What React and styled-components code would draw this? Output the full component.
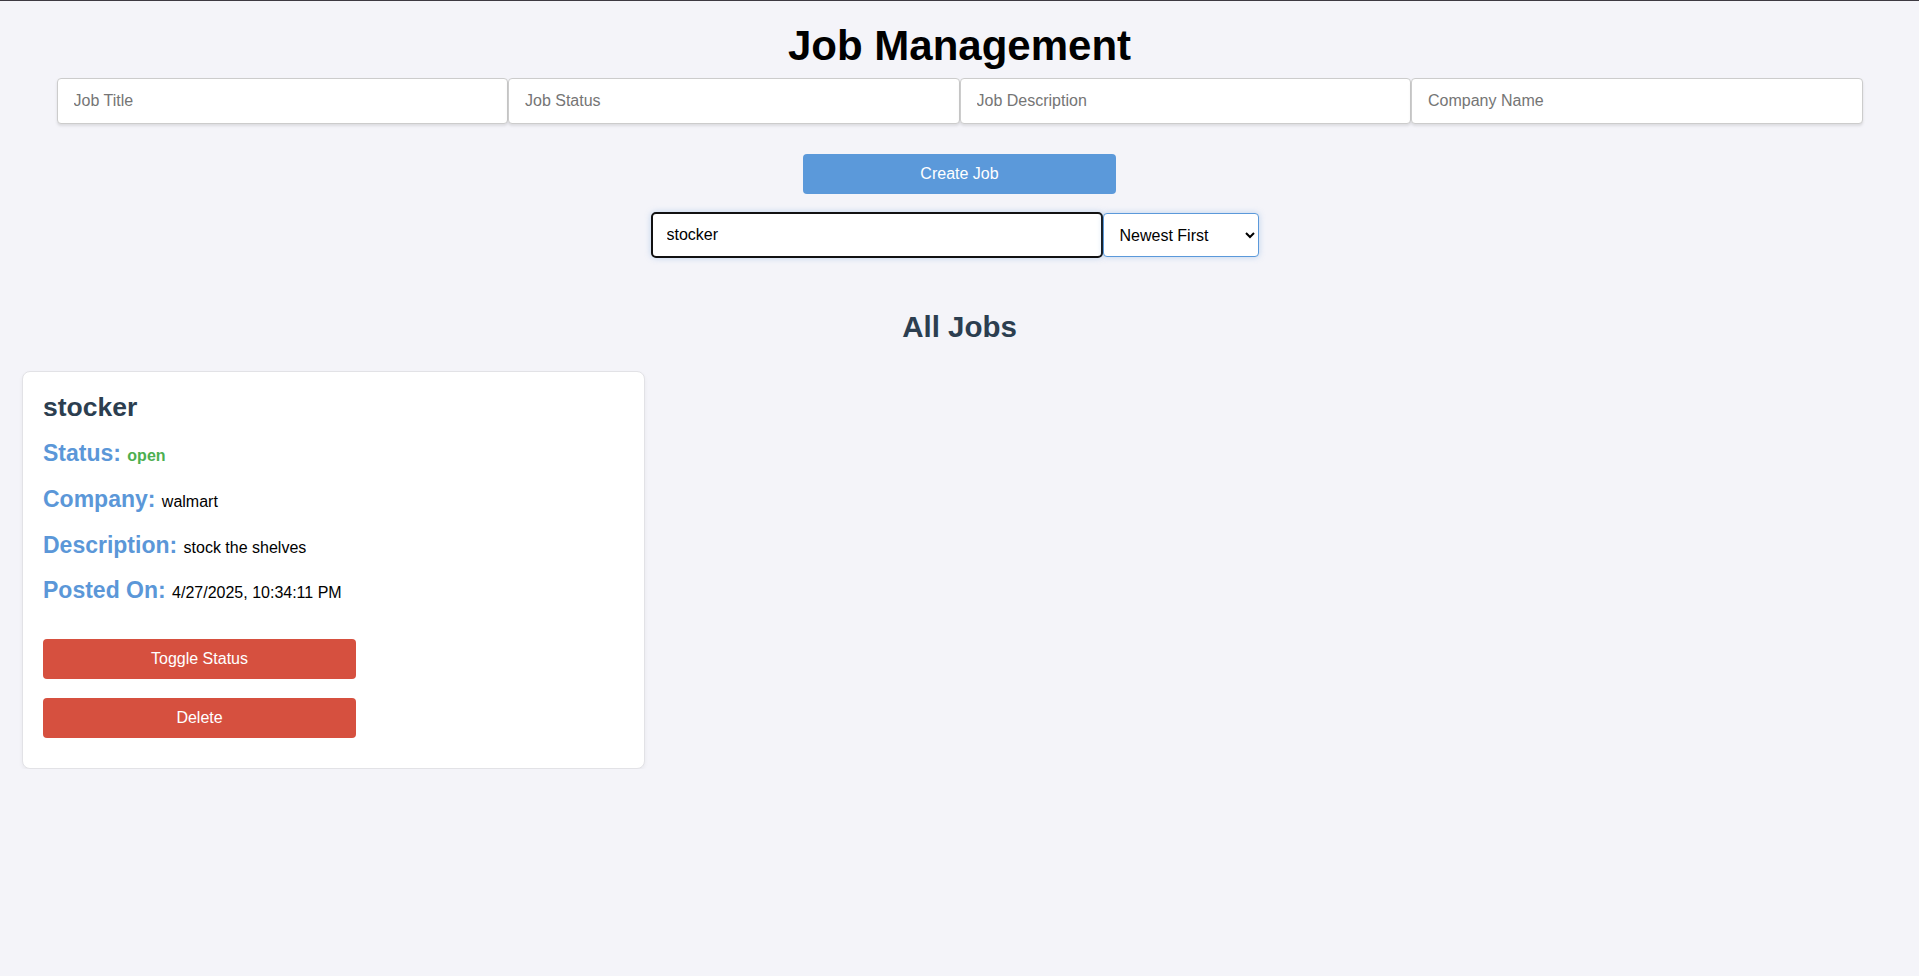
import React, { useEffect, useRef, useState } from "react";
import styled, { createGlobalStyle } from "styled-components";

const GlobalStyle = createGlobalStyle`
  html, body {
    margin: 0;
    padding: 0;
    background: #f4f4f9;
    font-family: "Liberation Sans", Arial, sans-serif;
    color: #000;
  }
  * { box-sizing: border-box; }
`;

const TopLine = styled.div`
  height: 1px;
  background: #3d3a42;
`;

const Page = styled.div`
  display: flex;
  flex-direction: column;
  align-items: stretch;
`;

const Title = styled.h1`
  margin: 21px 0 0;
  font-size: 42px;
  line-height: 48px;
  font-weight: 700;
  text-align: center;
  color: #000;
`;

const FormRow = styled.div`
  display: grid;
  grid-template-columns: repeat(4, 1fr);
  width: 1806px;
  margin: 8px auto 0;
`;

const TextInput = styled.input`
  height: 46px;
  padding: 0 16px;
  border: 1px solid #cccccc;
  border-radius: 4px;
  background: #fff;
  font-family: "Liberation Sans", Arial, sans-serif;
  font-size: 16px;
  color: #000;
  box-shadow: 0 2px 3px rgba(0, 0, 0, 0.1);
  outline: none;
  &::placeholder { color: #757575; }
`;

const ActionButton = styled.button`
  width: 313px;
  height: 40px;
  border: none;
  border-radius: 4px;
  background: ${(p) => (p.$danger ? "#d6503f" : "#5b99da")};
  color: #fff;
  font-family: "Liberation Sans", Arial, sans-serif;
  font-size: 16px;
  cursor: pointer;
  padding: 0;
`;

const CreateWrap = styled.div`
  display: flex;
  justify-content: center;
  margin-top: 30px;
`;

const SearchRow = styled.div`
  display: flex;
  justify-content: center;
  align-items: center;
  margin-top: 18px;
`;

const SearchInput = styled.input`
  width: 452px;
  height: 46px;
  padding: 0 16px 0 14px;
  border: 2px solid #111;
  border-radius: 5px;
  background: #fff;
  font-family: "Liberation Sans", Arial, sans-serif;
  font-size: 16px;
  color: #000;
  box-shadow: 0 0 6px rgba(91, 153, 218, 0.35);
  outline: none;
`;

const SortSelect = styled.select`
  width: 156px;
  height: 44px;
  margin-right: 10px;
  padding: 0 8px 0 12px;
  border: 1px solid #5b99da;
  border-radius: 4px;
  background: #fff;
  font-family: "Liberation Sans", Arial, sans-serif;
  font-size: 16px;
  color: #000;
  box-shadow: 0 0 6px rgba(91, 153, 218, 0.35);
  outline: none;
`;

const SectionTitle = styled.h2`
  margin: 52px 0 0;
  font-size: 29.5px;
  line-height: 34px;
  font-weight: 700;
  text-align: center;
  color: #2c3e50;
`;

const JobGrid = styled.div`
  display: grid;
  grid-template-columns: repeat(auto-fill, 623px);
  gap: 20px;
  padding: 0 22px;
  margin-top: 27px;
`;

const Card = styled.div`
  display: flex;
  flex-direction: column;
  background: #fff;
  border: 1px solid #e2e2e6;
  border-radius: 8px;
  padding: 20px 20px 30px;
  box-shadow: 0 2px 4px rgba(0, 0, 0, 0.05);
`;

const CardTitle = styled.h3`
  margin: 0;
  font-size: 26.5px;
  line-height: 30.5px;
  font-weight: 700;
  color: #2c3e50;
`;

const Details = styled.div`
  display: flex;
  flex-direction: column;
  gap: 19px;
  margin-top: 19.5px;
`;

const Row = styled.p`
  margin: 0;
  height: 26.8px;
  line-height: 26.5px;
  font-size: 16px;
  color: #000;
`;

const Label = styled.span`
  font-size: 23px;
  line-height: 1;
  font-weight: 700;
  color: #5b97d8;
`;

const StatusValue = styled.span`
  font-weight: 700;
  color: ${(p) => (p.$open ? "#4caf50" : "#d6503f")};
`;

const Buttons = styled.div`
  display: flex;
  flex-direction: column;
  gap: 19px;
  margin-top: 33px;
`;

const jobs = [
  {
    id: 1,
    title: "stocker",
    status: "open",
    company: "walmart",
    description: "stock the shelves",
    posted: "4/27/2025, 10:34:11 PM",
  },
];

export default function App() {
  const [search, setSearch] = useState("stocker");
  const ref = useRef(null);

  useEffect(() => {
    if (ref.current) {
      ref.current.focus();
      const n = ref.current.value.length;
      ref.current.setSelectionRange(n, n);
    }
  }, []);

  return (
    <>
      <GlobalStyle />
      <TopLine />
      <Page>
        <Title>Job Management</Title>
        <FormRow>
          <TextInput placeholder="Job Title" />
          <TextInput placeholder="Job Status" />
          <TextInput placeholder="Job Description" />
          <TextInput placeholder="Company Name" />
        </FormRow>
        <CreateWrap>
          <ActionButton>Create Job</ActionButton>
        </CreateWrap>
        <SearchRow>
          <SearchInput
            ref={ref}
            value={search}
            onChange={(e) => setSearch(e.target.value)}
          />
          <SortSelect defaultValue="newest">
            <option value="newest">Newest First</option>
            <option value="oldest">Oldest First</option>
          </SortSelect>
        </SearchRow>
        <SectionTitle>All Jobs</SectionTitle>
        <JobGrid>
          {jobs.map((job) => (
            <Card key={job.id}>
              <CardTitle>{job.title}</CardTitle>
              <Details>
                <Row>
                  <Label>Status: </Label>
                  <StatusValue $open={job.status === "open"}>{job.status}</StatusValue>
                </Row>
                <Row>
                  <Label>Company: </Label>
                  {job.company}
                </Row>
                <Row>
                  <Label>Description: </Label>
                  {job.description}
                </Row>
                <Row>
                  <Label>Posted On: </Label>
                  {job.posted}
                </Row>
              </Details>
              <Buttons>
                <ActionButton $danger>Toggle Status</ActionButton>
                <ActionButton $danger>Delete</ActionButton>
              </Buttons>
            </Card>
          ))}
        </JobGrid>
      </Page>
    </>
  );
}
